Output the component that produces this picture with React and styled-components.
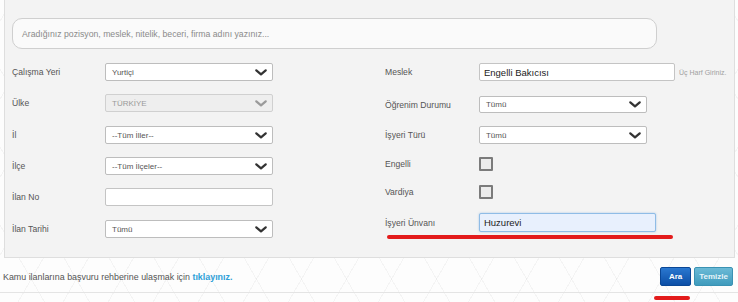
import React from "react";
import styled, { createGlobalStyle } from "styled-components";

const GlobalStyle = createGlobalStyle`
  body {
    margin: 0;
    background: #ffffff;
    font-family: "Liberation Sans", Arial, sans-serif;
  }
`;

const Page = styled.div`
  position: relative;
  width: 738px;
  height: 302px;
  overflow: hidden;
  background:
    repeating-linear-gradient(60deg, transparent 0 38px, rgba(0,0,0,0.035) 38px 39px),
    repeating-linear-gradient(-60deg, transparent 0 38px, rgba(0,0,0,0.035) 38px 39px),
    #fdfdfd;
`;

const Panel = styled.div`
  margin: -1px 3px 0 4px;
  height: 259px;
  box-sizing: border-box;
  background: #f3f3f3;
  border: 1px solid #dedede;
  padding: 18px 0 0 7px;
`;

const Search = styled.div`
  width: 645px;
  height: 31px;
  box-sizing: border-box;
  border: 1px solid #cfcfcf;
  border-radius: 10px;
  background: #fafafa;
  display: flex;
  align-items: center;
  padding-left: 9px;
  font-size: 8.7px;
  color: #8a8a8a;
`;

const Columns = styled.div`
  display: flex;
  margin-top: 14px;
`;

const Column = styled.div`
  display: flex;
  flex-direction: column;
  width: ${(p) => p.$width}px;
`;

const Row = styled.div`
  display: flex;
  align-items: center;
  height: ${(p) => p.$h}px;
  margin-top: ${(p) => p.$mt || 0}px;
`;

const Label = styled.div`
  width: ${(p) => p.$w}px;
  flex-shrink: 0;
  font-size: 8.6px;
  color: #555;
`;

const SelectBox = styled.div`
  width: ${(p) => p.$w || 168}px;
  height: ${(p) => p.$h || 18}px;
  box-sizing: border-box;
  border: 1px solid ${(p) => (p.$disabled ? "#d0d0d0" : "#bdbdbd")};
  border-radius: 2px;
  background: ${(p) => (p.$disabled ? "#eeeeee" : "#ffffff")};
  display: flex;
  align-items: center;
  justify-content: space-between;
  padding: 0 5px 0 6px;
  font-size: 8px;
  color: ${(p) => (p.$disabled ? "#9a9a9a" : "#555")};
`;

const TextBox = styled.div`
  width: ${(p) => p.$w}px;
  height: ${(p) => p.$h || 18}px;
  box-sizing: border-box;
  border: 1px solid ${(p) => (p.$focus ? "#8fbce6" : "#c4c4c4")};
  border-radius: 2px;
  background: ${(p) => (p.$focus ? "#e8f0fd" : "#ffffff")};
  box-shadow: ${(p) => (p.$focus ? "0 0 2px rgba(80,150,220,0.5)" : "none")};
  display: flex;
  align-items: center;
  padding-left: 4px;
  font-size: 9.5px;
  color: #222;
`;

const Hint = styled.span`
  margin-left: 4px;
  font-size: 7px;
  color: #a0a0a0;
  white-space: nowrap;
`;

const Check = styled.div`
  width: 14px;
  height: 14px;
  box-sizing: border-box;
  border: 2px solid #7b7b7b;
  border-radius: 1px;
  background: #ececec;
`;

const Footer = styled.div`
  height: 35px;
  box-sizing: border-box;
  border-bottom: 1px solid #e4e4e4;
  display: flex;
  align-items: center;
  justify-content: space-between;
  padding: 0 5px 0 3px;
`;

const FooterText = styled.div`
  font-size: 8.9px;
  color: #555;
  margin-top: 3px;
`;

const Link = styled.a`
  color: #2ea0d8;
  font-weight: bold;
  text-decoration: none;
`;

const Buttons = styled.div`
  display: flex;
  gap: 3px;
  margin-top: 2px;
`;

const Button = styled.div`
  height: 17px;
  padding: 0 ${(p) => p.$px}px;
  display: flex;
  align-items: center;
  border-radius: 2px;
  font-size: 8px;
  font-weight: bold;
  color: ${(p) => (p.$primary ? "#ffffff" : "#e6f4f9")};
  background: ${(p) =>
    p.$primary
      ? "linear-gradient(#2a78d0, #0c4ea6)"
      : "linear-gradient(#6bbad6, #3f9bbd)"};
  border: 1px solid ${(p) => (p.$primary ? "#0a4796" : "#3a92b3")};
`;

const Marker = styled.div`
  position: absolute;
  left: ${(p) => p.$x}px;
  top: ${(p) => p.$y}px;
  width: ${(p) => p.$w}px;
  height: 4px;
  border-radius: 2px;
  background: #e31b1b;
`;

const Chevron = ({ light }) => (
  <svg width="12" height="7" viewBox="0 0 12 7">
    <path
      d="M1.3 1.3 L6 5.4 L10.7 1.3"
      fill="none"
      stroke={light ? "#9a9a9a" : "#333"}
      strokeWidth="2.2"
      strokeLinecap="round"
      strokeLinejoin="round"
    />
  </svg>
);

const Select = ({ value, disabled, w, h }) => (
  <SelectBox $disabled={disabled} $w={w} $h={h}>
    <span>{value}</span>
    <Chevron light={disabled} />
  </SelectBox>
);

export default function App() {
  return (
    <Page>
      <GlobalStyle />
      <Panel>
        <Search>Aradığınız pozisyon, meslek, nitelik, beceri, firma adını yazınız...</Search>
        <Columns>
          <Column $width={374}>
            <Row $h={18}>
              <Label $w={93}>Çalışma Yeri</Label>
              <Select value="Yurtiçi" />
            </Row>
            <Row $h={18} $mt={13}>
              <Label $w={93}>Ülke</Label>
              <Select value="TÜRKİYE" disabled />
            </Row>
            <Row $h={18} $mt={14}>
              <Label $w={93}>İl</Label>
              <Select value="--Tüm İller--" />
            </Row>
            <Row $h={18} $mt={13}>
              <Label $w={93}>İlçe</Label>
              <Select value="--Tüm İlçeler--" />
            </Row>
            <Row $h={18} $mt={13}>
              <Label $w={93}>İlan No</Label>
              <TextBox $w={168} />
            </Row>
            <Row $h={18} $mt={14}>
              <Label $w={93}>İlan Tarihi</Label>
              <Select value="Tümü" />
            </Row>
          </Column>
          <Column $width={350}>
            <Row $h={18}>
              <Label $w={94}>Meslek</Label>
              <TextBox $w={196}>Engelli Bakıcısı</TextBox>
              <Hint>Üç Harf Giriniz.</Hint>
            </Row>
            <Row $h={17} $mt={15}>
              <Label $w={94}>Öğrenim Durumu</Label>
              <Select value="Tümü" h={17} />
            </Row>
            <Row $h={18} $mt={13}>
              <Label $w={94}>İşyeri Türü</Label>
              <Select value="Tümü" />
            </Row>
            <Row $h={14} $mt={13}>
              <Label $w={94}>Engelli</Label>
              <Check />
            </Row>
            <Row $h={14} $mt={14}>
              <Label $w={94}>Vardiya</Label>
              <Check />
            </Row>
            <Row $h={19} $mt={14}>
              <Label $w={94}>İşyeri Ünvanı</Label>
              <TextBox $w={177} $h={19} $focus>Huzurevi</TextBox>
            </Row>
          </Column>
        </Columns>
      </Panel>
      <Footer>
        <FooterText>
          Kamu ilanlarına başvuru rehberine ulaşmak için <Link href="#">tıklayınız.</Link>
        </FooterText>
        <Buttons>
          <Button $primary $px={8}>Ara</Button>
          <Button $px={4}>Temizle</Button>
        </Buttons>
      </Footer>
      <Marker $x={387} $y={235} $w={286} />
      <Marker $x={654} $y={296} $w={36} />
    </Page>
  );
}
